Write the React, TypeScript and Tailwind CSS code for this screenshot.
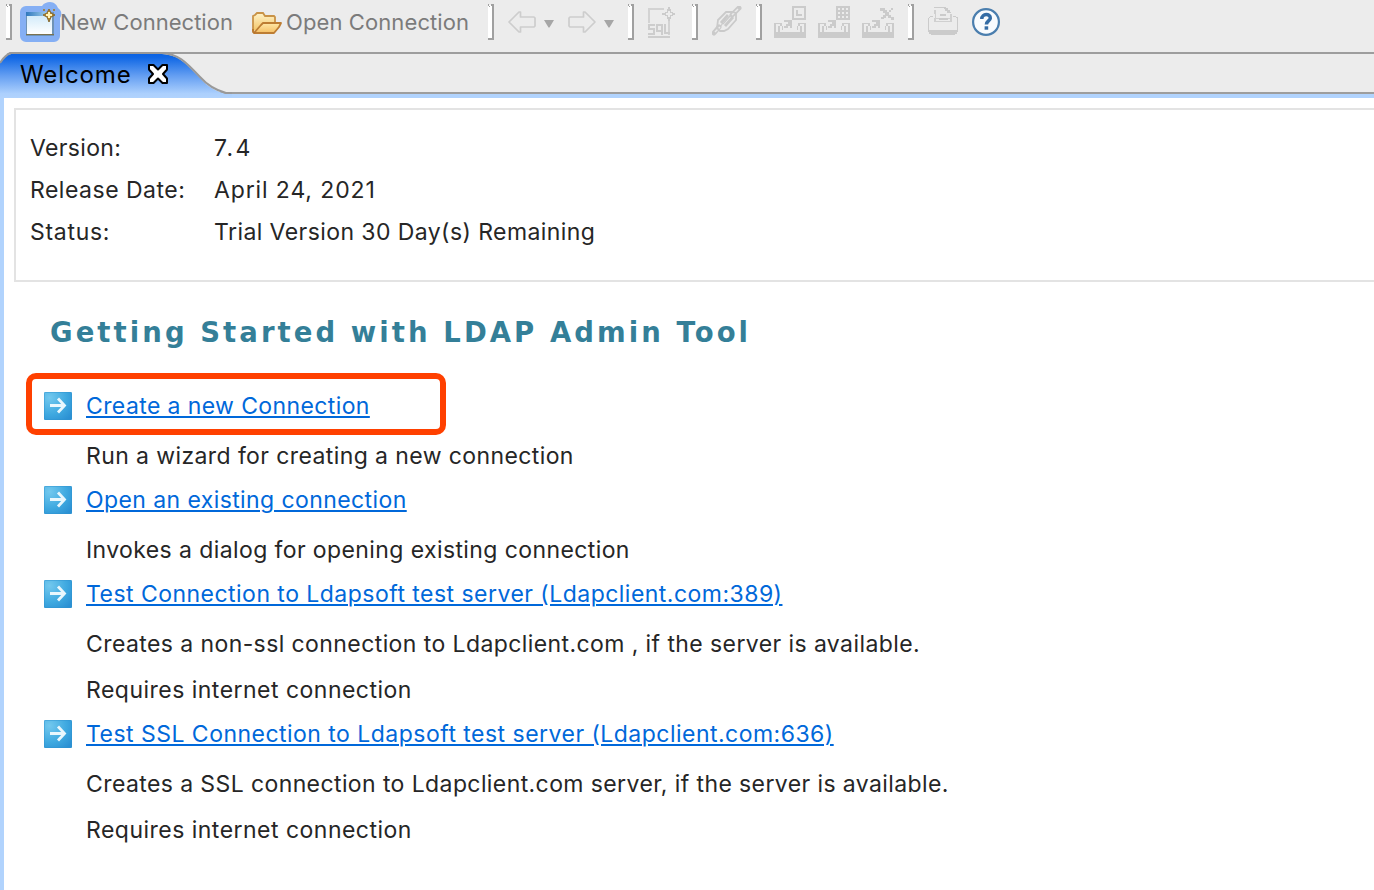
import type { ReactNode } from 'react';

function Separator({ className = '' }: { className?: string }) {
  return (
    <svg className={`h-9 w-1.5 shrink-0 ${className}`} viewBox="0 0 6 36" shapeRendering="crispEdges">
      <path d="M0 1h4v33H0z" fill="#fff" />
      <path d="M4 0h2v36H0v-2h4z" fill="#a0a0a0" />
      <path d="M0 0h1v2H0zM3 0h1v2H3zM1 2h1v1H1z" fill="#a0a0a0" />
    </svg>
  );
}

function NewConnectionIcon() {
  return (
    <svg className="h-11 w-[42px] shrink-0" viewBox="0 0 42 44">
      <defs>
        <linearGradient id="win" x1="0" y1="0" x2="0" y2="1">
          <stop offset="0" stopColor="#d3ebfa" />
          <stop offset="1" stopColor="#fff" />
        </linearGradient>
        <linearGradient id="bar" x1="0" y1="0" x2="1" y2="0">
          <stop offset="0" stopColor="#2f78bd" />
          <stop offset="1" stopColor="#a5d2ee" />
        </linearGradient>
      </defs>
      <path d="M6 6h16c2-3 5-4 8-4 4 0 7 3 8 6 3 2 4 5 3 8l-1 2v18a6 6 0 0 1-6 6H6a6 6 0 0 1-6-6V12a6 6 0 0 1 6-6z" fill="#85aff4" />
      <g shapeRendering="crispEdges">
        <path d="M6 12h28v24H6z" fill="#6f93b5" />
        <path d="M7 16h25v18H7z" fill="url(#win)" />
        <path d="M6 12h22v4H6z" fill="url(#bar)" />
        <path d="M6 34h28v1H6z" fill="#7b7250" />
      </g>
      <path d="M29 9l2 4 4 2-4 2-2 5-2-5-4-2 4-2z" fill="#b98722" stroke="#86692f" strokeWidth="1" />
      <path d="M28 12h2v2h2v2h-2v2h-2v-2h-2v-2h2z" fill="#fff3b8" />
      <path d="M23 9h2v2h-2zM33 9h2v2h-2z" fill="#9a8350" />
    </svg>
  );
}

function FolderIcon() {
  return (
    <svg className="h-[22px] w-[30px] shrink-0" viewBox="0 0 30 22">
      <defs>
        <linearGradient id="fback" x1="0" y1="0" x2="0" y2="1">
          <stop offset="0" stopColor="#fff3c9" />
          <stop offset="1" stopColor="#f3c566" />
        </linearGradient>
        <linearGradient id="ffront" x1="0" y1="0" x2="0" y2="1">
          <stop offset="0" stopColor="#ffe8a8" />
          <stop offset="1" stopColor="#f5bf63" />
        </linearGradient>
      </defs>
      <path d="M1 19V4l2-1 2-2h6l2 3h9l1 1v6" fill="url(#fback)" stroke="#c99347" strokeWidth="1.8" />
      <path d="M2 21l7-8 2-2h18l-2 4-5 6z" fill="url(#ffront)" stroke="#bd7d33" strokeWidth="1.8" strokeLinejoin="round" />
      <path d="M1 17v3l2 1" fill="none" stroke="#b9772c" strokeWidth="1.8" />
    </svg>
  );
}

function ArrowIcon({ className = '' }: { className?: string }) {
  return (
    <svg className={`h-6 w-7 shrink-0 ${className}`} viewBox="0 0 28 24" fill="none">
      <path d="M1 12L11 2h1.500v5H26l1 1v8l-1 1H12.500v5H11z" stroke="#cdcdcd" strokeWidth="1.700" strokeLinejoin="round" />
    </svg>
  );
}

function Caret({ className = '' }: { className?: string }) {
  return (
    <svg className={`h-2 w-2.5 shrink-0 ${className}`} viewBox="0 0 10 8">
      <path d="M0 0h10L5.500 7.500h-1z" fill="#a6a6a6" />
    </svg>
  );
}

function QueryIcon() {
  return (
    <svg className="h-8 w-[30px] shrink-0" viewBox="0 0 30 32" shapeRendering="crispEdges" fill="none" stroke="#cdcdcd">
      <path d="M1 16V2h15M21 14v14" strokeWidth="2" stroke="#d3d3d3" />
      <path d="M0 30h22" strokeWidth="2" />
      <path d="M7 18H1v4h5v5H0M14 28V18H9v6h5M17 17v9h5" strokeWidth="2" />
      <path
        d="M20 0h2v2h1v3h2v1h2v2h-2v1h-2v3h-1v2h-2v-2h-1V9h-2V8h-3V6h3V5h2V2h1zM20 4v2h-2v2h2v2h2V8h2V6h-2V4z"
        fill="#cbcbcb"
        fillRule="evenodd"
        stroke="none"
      />
    </svg>
  );
}

function LinkIcon() {
  return (
    <svg className="h-[30px] w-[30px] shrink-0" viewBox="0 0 30 30" fill="none" stroke="#cacaca">
      <path d="M2 27l5-6M20 9l7-7" strokeWidth="5" strokeLinecap="round" />
      <path d="M3 26l5-5M20 9l6-6" strokeWidth="1.500" stroke="#ebebeb" />
      <path d="M5 22l1-8 8-8h6l4 1v7l-8 9-4 2H8z" strokeWidth="1.800" />
      <path d="M9 17l7-8M13 20l8-9" strokeWidth="2.800" />
      <path d="M11 18l7-8M8 21l3-4" strokeWidth="1.200" />
    </svg>
  );
}

function TrayIcon({ kind, className = '' }: { kind: 'log' | 'grid' | 'delete'; className?: string }) {
  return (
    <svg className={`h-8 w-8 shrink-0 ${className}`} viewBox="0 0 32 32" shapeRendering="crispEdges" fill="#cbcbcb">
      <path d="M0 17h8v3H6v6h20v-6h-2v-3h8v15H0z" />
      <path d="M2 18h4v2H4v6H2zM26 18h4v8h-2v-6h-2z" fill="#ececec" />
      <path d="M8 20h1v4H8zM23 20h1v4h-1zM10 14h8v8h-2v-2h-2v2h-4v-2h2v-2h2v-2h-4z" />
      {kind === 'log' && <path fillRule="evenodd" d="M18 0h14v14H18zM20 2v10h10V2zM22 4h2v4h4v2h-6z" />}
      {kind === 'grid' && (
        <path fillRule="evenodd" d="M18 0h14v14H18zM20 2v2h2V2zM24 2v2h2V2zM28 2v2h2V2zM20 6v2h2V6zM24 6v2h2V6zM28 6v2h2V6zM20 10v2h2v-2zM24 10v2h2v-2zM28 10v2h2v-2z" />
      )}
      {kind === 'delete' && (
        <path d="M18 2h5v2h2v2h2V4h2V2h2v2h-2v2h-2v3h2v2h3v3h-3v-2h-3v-2h-2v2h-2v1h-3v-2h2V9h2V7h-2V5h-3z" />
      )}
    </svg>
  );
}

function PrinterIcon() {
  return (
    <svg className="h-[30px] w-[30px] shrink-0" viewBox="0 0 30 30" shapeRendering="crispEdges" fill="#cbcbcb">
      <path d="M6 4h2v8h14V8h2v8H6v-4h1z" fill="#d0d0d0" />
      <path d="M8 13h14v2H8z" fill="#ececec" />
      <path d="M6 1h10v1H6zM16 1h2v1h2v2h2v2h1v1h-4V5h-2V3h-1zM12 8h6v2h-6zM11 12h9v2h-9z" />
      <path d="M2 10h3v1H2v1H1v12h28V12h-1v-1h-3v-1h3v1h2v15h-1v2h-2v1H3v-1H1v-2H0V12h1v-1h1z" />
      <path d="M1 24h28v3h-2v2H3v-2H1z" />
    </svg>
  );
}

function HelpIcon() {
  return (
    <svg className="h-[30px] w-[30px] shrink-0" viewBox="0 0 30 30" fill="none">
      <circle cx="15" cy="15" r="12.900" fill="#f8fbfe" stroke="#4a7eae" strokeWidth="2.200" />
      <path d="M10.800 12c0-6 8.700-5.500 8.500-.9-.1 2.800-3.900 3-3.900 6.400" stroke="#336ca5" strokeWidth="3.500" />
      <path d="M13.600 19.300h3.600v3.400h-3.600z" fill="#336ca5" />
    </svg>
  );
}

function CloseIcon() {
  return (
    <svg className="h-5 w-5 shrink-0" viewBox="0 0 20 20">
      <path d="M1 1h4.500L10 5.500 14.500 1H19v4.500L15 10l4 4.500V19h-4.500L10 14.500 5.500 19H1v-4.500L5 10 1 5.500z" fill="#fff" stroke="#000" strokeWidth="2" strokeLinejoin="round" />
    </svg>
  );
}

function GoIcon() {
  return (
    <svg className="h-7 w-7 shrink-0" viewBox="0 0 28 28">
      <defs>
        <radialGradient id="go" cx="0.2" cy="0.2" r="1">
          <stop offset="0" stopColor="#72c8ee" />
          <stop offset="0.6" stopColor="#3fa9e0" />
          <stop offset="1" stopColor="#2b90d3" />
        </radialGradient>
      </defs>
      <rect width="28" height="28" rx="1.500" fill="url(#go)" />
      <path d="M.5 .5h27v27H.5z" fill="none" stroke="#2e93cf" strokeOpacity=".45" />
      <path d="M6 13.500h14M14 6.500l6.500 7-6.500 7" fill="none" stroke="#e9f7fd" strokeWidth="2.800" />
    </svg>
  );
}

const info = [
  { label: 'Version:', value: '7.4', labelTrack: 'tracking-[0.35px]', valueTrack: 'tracking-[2.4px]' },
  { label: 'Release Date:', value: 'April 24, 2021', labelTrack: 'tracking-[0.5px]', valueTrack: 'tracking-[0.88px]' },
  { label: 'Status:', value: 'Trial Version 30 Day(s) Remaining', labelTrack: 'tracking-[0.7px]', valueTrack: 'tracking-[0.42px]' },
];

function Action({ title, track, children }: { title: string; track: string; children: ReactNode }) {
  return (
    <section>
      <div className="flex h-[42px] items-center gap-3.5 pl-10">
        <GoIcon />
        <a
          href="#"
          className={`text-[#0068da] underline decoration-2 underline-offset-[2px] ${track}`}
        >
          {title}
        </a>
      </div>
      <div className="pt-1.5 pl-[82px] leading-[46px]">{children}</div>
    </section>
  );
}

export default function App() {
  return (
    <div className="flex h-[890px] w-[1374px] flex-col overflow-hidden bg-white font-['Inter','Liberation_Sans',sans-serif] whitespace-nowrap text-[#262626]">
      <header className="flex h-[52px] shrink-0 items-start bg-[#ececec] text-[22px] leading-[44px] tracking-[0.1px] text-[#7b7b7b]">
        <Separator className="mt-1 ml-1.5" />
        <button className="ml-2 flex">
          <NewConnectionIcon />
          <span className="-ml-0.5 w-48 text-left tracking-[0.03px]">New Connection</span>
        </button>
        <button className="flex">
          <span className="mt-3"><FolderIcon /></span>
          <span className="ml-1 w-[202px] text-left">Open Connection</span>
        </button>
        <Separator className="mt-1" />
        <ArrowIcon className="mt-2.5 ml-3.5" />
        <Caret className="mt-5 ml-2" />
        <ArrowIcon className="mt-2.5 ml-3.5 -scale-x-100" />
        <Caret className="mt-5 ml-2" />
        <Separator className="mt-1 ml-3.5" />
        <span className="mt-[7px] ml-3.5"><QueryIcon /></span>
        <Separator className="mt-1 ml-3.5" />
        <span className="mt-1.5 ml-3.5"><LinkIcon /></span>
        <Separator className="mt-1 ml-3.5" />
        <TrayIcon kind="log" className="mt-1.5 ml-3" />
        <TrayIcon kind="grid" className="mt-1.5 ml-3" />
        <TrayIcon kind="delete" className="mt-1.5 ml-3" />
        <Separator className="mt-1 ml-3.5" />
        <span className="mt-1.5 ml-3.5"><PrinterIcon /></span>
        <span className="mt-[7px] ml-[13px]"><HelpIcon /></span>
      </header>

      <nav className="h-[46px] shrink-0 border-t-2 border-b-4 border-[#9d9d9d] border-b-[#b1d3fd] bg-[#ececec]">
        <div className="relative flex h-10 border-b-2 border-[#9d9d9d]">
          <svg className="absolute -top-0.5 left-0 h-[46px] w-[232px]" viewBox="0 0 232 46">
            <defs>
              <linearGradient id="tab" x1="0" y1="0" x2="0" y2="1">
                <stop offset="0" stopColor="#0b63e3" />
                <stop offset="0.08" stopColor="#1168e5" />
                <stop offset="0.5" stopColor="#659ff2" />
                <stop offset="0.9" stopColor="#acd0fd" />
                <stop offset="1" stopColor="#b1d3fd" />
              </linearGradient>
            </defs>
            <path d="M0 0h10Q3 3 0 10z" fill="#ececec" />
            <path d="M0 11Q5 3 11 2h151c16 1 23 8 38 24 8 9 15 13 26 16h6v4H0z" fill="url(#tab)" />
            <path d="M0 11Q5 3 11 1h151c16 1 23 8 38 24 8 9 15 13 26 16h6" fill="none" stroke="#999" strokeWidth="2" />
          </svg>
          <div className="relative flex items-center pl-5 text-[24px] leading-[42px] text-black">
            <span className="mt-[3px] w-32 tracking-[0.9px]">Welcome</span>
            <span className="mt-0.5"><CloseIcon /></span>
          </div>
        </div>
      </nav>

      <main className="flex-1 border-l-4 border-[#b1d3fd] pt-2.5 text-[23px]">
        <div className="ml-2.5 h-[174px] border-2 border-r-0 border-[#e3e3e3] pt-[17px] pl-3.5">
          {info.map((row) => (
            <div key={row.label} className="flex h-[42px] items-center">
              <span className={`w-[184px] ${row.labelTrack}`}>{row.label}</span>
              <span className={row.valueTrack}>{row.value}</span>
            </div>
          ))}
        </div>

        <h1 className="mt-[30px] mb-[33px] pl-[46px] font-['DejaVu_Sans',Verdana,sans-serif] text-[27.500px] leading-10 font-bold tracking-[3.06px] text-[#347f98]">
          Getting Started with LDAP Admin Tool
        </h1>

        <div className="relative">
          <div className="pointer-events-none absolute -top-3 left-[22px] h-[62px] w-[420px] rounded-[10px] border-[6px] border-[#ff4000]" />
          <Action title="Create a new Connection" track="tracking-[0.39px]">
            <p className="tracking-[0.4px]">Run a wizard for creating a new connection</p>
          </Action>
          <Action title="Open an existing connection" track="tracking-[0.41px]">
            <p className="tracking-[0.4px]">Invokes a dialog for opening existing connection</p>
          </Action>
          <Action title="Test Connection to Ldapsoft test server (Ldapclient.com:389)" track="tracking-[0.47px]">
            <p className="tracking-[0.41px]">Creates a non-ssl connection to Ldapclient.com , if the server is available.</p>
            <p className="tracking-[0.48px]">Requires internet connection</p>
          </Action>
          <Action title="Test SSL Connection to Ldapsoft test server (Ldapclient.com:636)" track="tracking-[0.475px]">
            <p className="tracking-[0.4px]">Creates a SSL connection to Ldapclient.com server, if the server is available.</p>
            <p className="tracking-[0.48px]">Requires internet connection</p>
          </Action>
        </div>
      </main>
    </div>
  );
}
